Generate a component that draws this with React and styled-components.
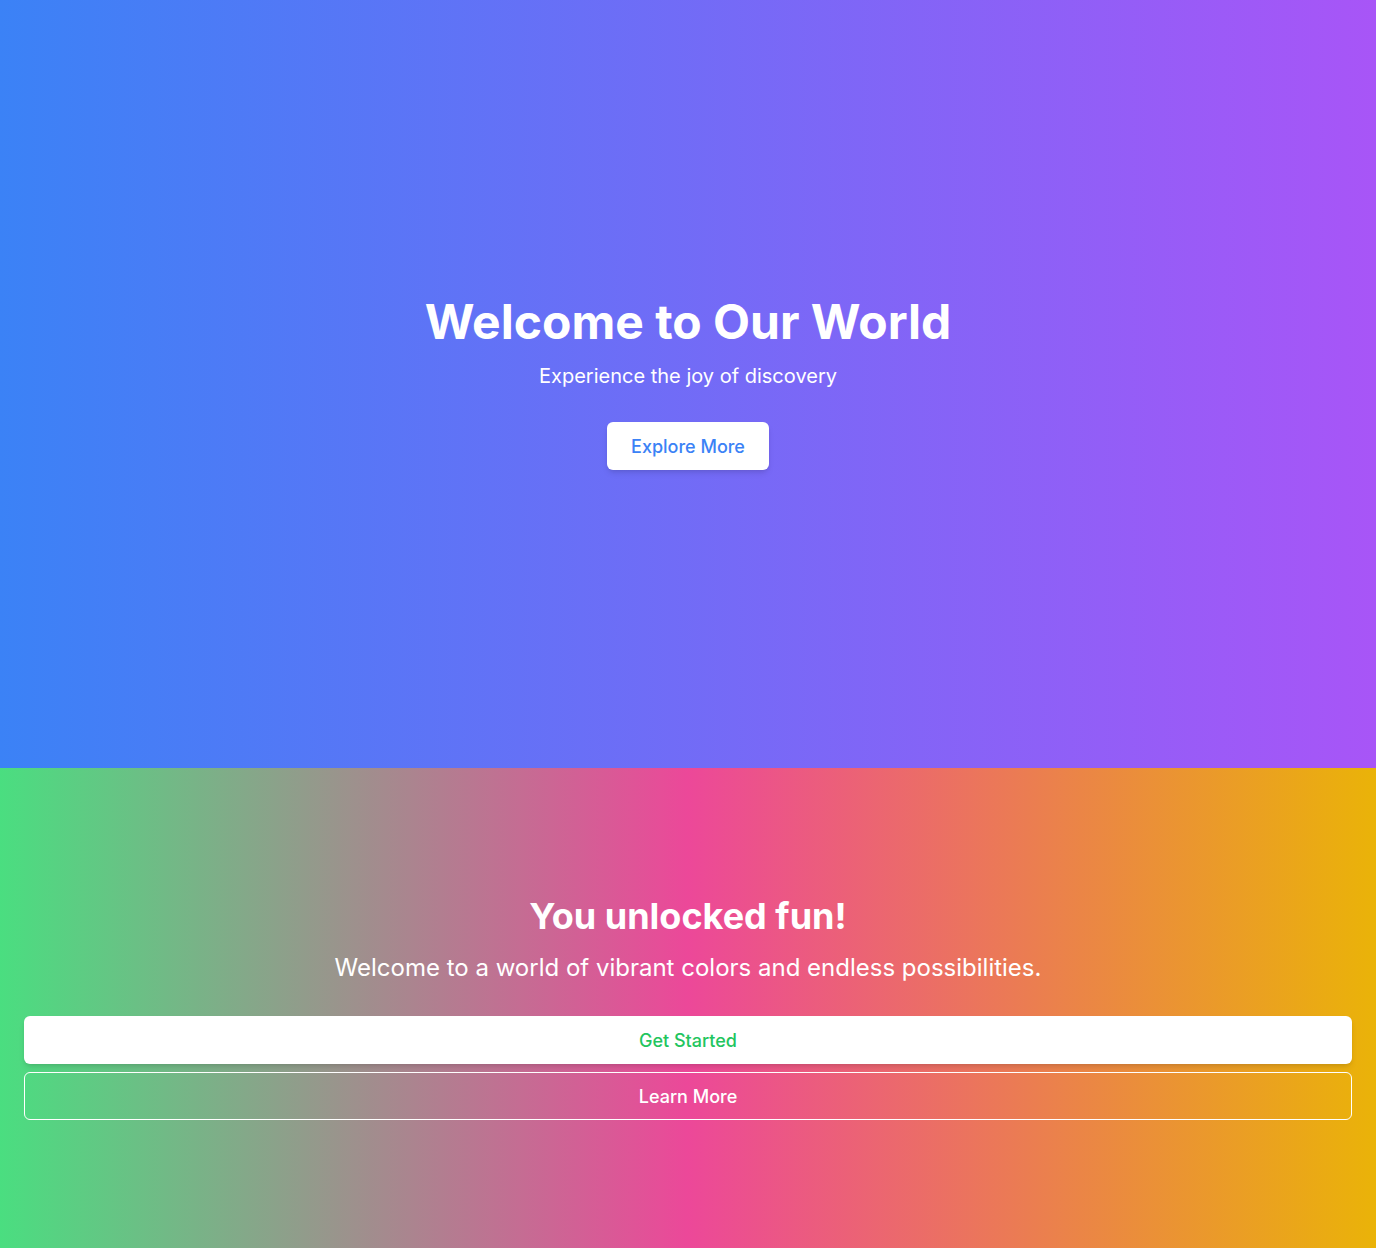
import styled, { createGlobalStyle } from 'styled-components';

const GlobalStyle = createGlobalStyle`
  * { box-sizing: border-box; }
  body {
    margin: 0;
    font-family: Inter, 'Noto Sans', sans-serif;
    -webkit-font-smoothing: antialiased;
  }
`;

export default function App() {
  return (
    <>
      <GlobalStyle />
      <Hero>
        <HeroTitle>Welcome to Our World</HeroTitle>
        <HeroSubtitle>Experience the joy of discovery</HeroSubtitle>
        <ExploreButton>Explore More</ExploreButton>
      </Hero>
      <FunSection>
        <FunTitle>You unlocked fun!</FunTitle>
        <FunText>Welcome to a world of vibrant colors and endless possibilities.</FunText>
        <ButtonStack>
          <WideButton $variant="solid">Get Started</WideButton>
          <WideButton $variant="outline">Learn More</WideButton>
        </ButtonStack>
      </FunSection>
    </>
  );
}

const Hero = styled.section`
  height: 768px;
  display: flex;
  flex-direction: column;
  align-items: center;
  justify-content: center;
  background: linear-gradient(to right, #3b82f6, #a855f7);
  color: #fff;
  text-align: center;
`;

const HeroTitle = styled.h1`
  margin: 0 0 16px;
  font-size: 48px;
  line-height: 48px;
  font-weight: 700;
`;

const HeroSubtitle = styled.p`
  margin: 0 0 32px;
  font-size: 20px;
  line-height: 28px;
`;

const ExploreButton = styled.button`
  height: 48px;
  padding: 0 24px;
  border: none;
  border-radius: 6px;
  background: #fff;
  color: #3b82f6;
  font-family: inherit;
  font-size: 18px;
  font-weight: 500;
  box-shadow: 0 4px 6px -1px rgba(0, 0, 0, 0.1), 0 2px 4px -2px rgba(0, 0, 0, 0.1);
  cursor: pointer;
`;

const FunSection = styled.section`
  height: 480px;
  padding: 0 24px;
  display: flex;
  flex-direction: column;
  align-items: center;
  justify-content: center;
  background: linear-gradient(to right, #4ade80, #ec4899, #eab308);
  color: #fff;
  text-align: center;
`;

const FunTitle = styled.h2`
  margin: 0 0 16px;
  font-size: 36px;
  line-height: 40px;
  font-weight: 700;
`;

const FunText = styled.p`
  margin: 0 0 32px;
  font-size: 24px;
  line-height: 32px;
`;

const ButtonStack = styled.div`
  width: 100%;
  display: flex;
  flex-direction: column;
  gap: 8px;
`;

const WideButton = styled.button`
  width: 100%;
  height: 48px;
  border-radius: 6px;
  font-family: inherit;
  font-size: 18px;
  font-weight: 500;
  cursor: pointer;
  border: 1px solid ${p => (p.$variant === 'solid' ? 'transparent' : '#fff')};
  background: ${p => (p.$variant === 'solid' ? '#fff' : 'transparent')};
  color: ${p => (p.$variant === 'solid' ? '#22c55e' : '#fff')};
  box-shadow: ${p => (p.$variant === 'solid'
    ? '0 4px 6px -1px rgba(0, 0, 0, 0.1), 0 2px 4px -2px rgba(0, 0, 0, 0.1)'
    : 'none')};
`;
